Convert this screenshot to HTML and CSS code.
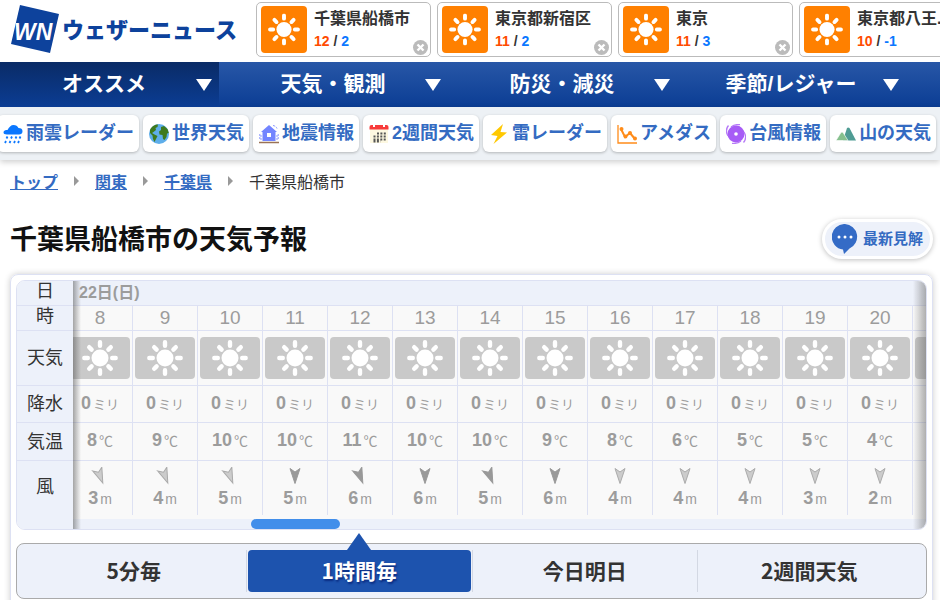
FILE: index.html
```html
<!DOCTYPE html>
<html lang="ja">
<head>
    <meta charset="UTF-8">
    <title>千葉県船橋市の天気予報 - ウェザーニュース</title>
    <link rel="stylesheet" href="styles.css">
</head>
<body>

<svg class="symbols" aria-hidden="true">
    <symbol id="sun" viewBox="0 0 36 36">
        <circle cx="18" cy="18" r="8.5" fill="#fff"/>
        <path d="M18 2.3v3.500M18 30.200v3.500M2.3 18h3.500M30.200 18h3.500M7.200 7.200l2.4 2.4M26.400 26.400l2.4 2.4M28.800 7.200l-2.4 2.4M9.600 26.400l-2.4 2.4" stroke="#fff" stroke-width="4.4" stroke-linecap="round"/>
    </symbol>
    <symbol id="close" viewBox="0 0 15 15">
        <circle cx="7.5" cy="7.5" r="7.5" fill="#bbb"/>
        <path d="M4.5 4.5l6 6M10.5 4.5l-6 6" stroke="#fff" stroke-width="2.4"/>
    </symbol>
</svg>

<header class="header">
    <a class="logo" href="#">
        <svg width="50" height="50" viewBox="0 0 50 50" aria-hidden="true">
            <path d="M10 0L49 9L40 48L1 39Z" fill="#0d429c"/>
            <text class="logo-mark" x="4" y="35">WN</text>
        </svg>
        <span class="logo-text">ウェザーニュース</span>
    </a>
    <div class="places" id="places"></div>
</header>

<nav class="menu">
    <a class="menu-item active" href="#"><span>オススメ</span><i class="caret"></i></a>
    <a class="menu-item" href="#"><span>天気・観測</span><i class="caret"></i></a>
    <a class="menu-item" href="#"><span>防災・減災</span><i class="caret"></i></a>
    <a class="menu-item" href="#"><span>季節/レジャー</span><i class="caret"></i></a>
</nav>

<nav class="shortcuts">
    <a class="pill" href="#">
        <svg width="20" height="20" viewBox="0 0 20 20"><path d="M4 10.5C1.5 10.5 .5 9.5 .5 8.2C.5 6.5 2.5 6 4.5 6C6 3 8 1 10.5 1C13 1 14.5 2 15.5 4C18 4 19.5 5 19.5 7.2C19.5 9.5 18 10.5 16 10.5Z" fill="#0b77ff"/><path d="M4.5 12.5l-1 2M9 12.5l-1 2M13.500 12.5l-1 2M17.5 12.5l-1 2M3 17l-1 2M7.5 17l-1 2M12 17l-1 2M16 17l-1 2" stroke="#0b77ff" stroke-width="1.8"/></svg>
        <span>雨雲レーダー</span>
    </a>
    <a class="pill" href="#">
        <svg width="20" height="20" viewBox="0 0 20 20"><circle cx="10" cy="10" r="10" fill="#5eaeea"/><path d="M1 6C3 2 6 .5 9 .5L8.500 3L6.5 4L7 6L4.5 8L3 9L5.5 10.5L8.5 12L7 15L5.5 18L4 15L3.5 11.5L1 9Z" fill="#3f7a1d"/><path d="M12 3L15 2L18.5 5L19.8 9L18 9.5L17.5 13L15.5 16L14 15L13.5 11L10.5 10.5L10 7.5L12 6Z" fill="#3f7a1d"/></svg>
        <span>世界天気</span>
    </a>
    <a class="pill" href="#">
        <svg width="20" height="20" viewBox="0 0 20 20"><path d="M10 1L18 8H16.5V17H3.500V8H2Z" fill="#7385ff"/><path d="M8 9h4v4H8z" fill="#fff"/><path d="M14 1.5q3 .5 4 3M.8 10v6M19.2 10v6M2 11v5M18 11v5" stroke="#8b99ff" stroke-dasharray="2 1" fill="none"/><path d="M0 18.5h20" stroke="#9a7356" stroke-width="1.5"/></svg>
        <span>地震情報</span>
    </a>
    <a class="pill" href="#">
        <svg width="20" height="20" viewBox="0 0 20 20"><path d="M1 5h18v14H1z" fill="#fdf8e1"/><path d="M.5 5.5V3q0-2 2-2h15q2 0 2 2v2.5z" fill="#f83b3b"/><path d="M4 2h2M14 2h2" stroke="#fff" stroke-width="2"/><path d="M8 9.500h9M4.5 12.5h12.5M4.5 15.5h12.5M4.5 17.5h7" stroke="#555" stroke-width="2" stroke-dasharray="2 1.4"/></svg>
        <span>2週間天気</span>
    </a>
    <a class="pill" href="#">
        <svg width="20" height="20" viewBox="0 0 20 20"><path d="M14 0L2 11L8.5 12L4.5 20L18 8.500L11.5 8Z" fill="#ffc800"/></svg>
        <span>雷レーダー</span>
    </a>
    <a class="pill" href="#">
        <svg width="20" height="20" viewBox="0 0 20 20"><path d="M1 1v18h19" stroke="#ff8c1a" stroke-width="1.3" fill="none"/><path d="M4 5l4 8 5-4 5 6" stroke="#ff8c1a" stroke-width="2" fill="none"/><g fill="#ff8c1a"><circle cx="4.5" cy="5" r="2"/><circle cx="8.5" cy="12.5" r="2"/><circle cx="13" cy="9" r="2"/><circle cx="18" cy="14.5" r="2"/></g></svg>
        <span>アメダス</span>
    </a>
    <a class="pill" href="#">
        <svg width="20" height="20" viewBox="0 0 20 20"><circle cx="10" cy="10" r="8.5" fill="#a75cf6"/><path d="M2 12C-.5 8 .5 4 2.5 1.5M18 8C20.5 12 19.5 16 17.5 18.5M5 3Q9 0 14 .7M15 17Q11 20 6 19.3" stroke="#b67af8" stroke-width="1.3" fill="none"/><circle cx="10" cy="10" r="1.8" fill="#fff"/></svg>
        <span>台風情報</span>
    </a>
    <a class="pill" href="#">
        <svg width="20" height="20" viewBox="0 0 20 20"><path d="M7 16.5L11 4Q12 3 13.5 4L20 16.5Z" fill="#4f9c94"/><path d="M0 16.5L5 8.5Q6 7.5 7 8.5L12 16.5Z" fill="#86c08e" stroke="#fff" stroke-width=".6"/></svg>
        <span>山の天気</span>
    </a>
</nav>

<main class="main">
    <nav class="breadcrumbs">
        <a href="#">トップ</a><i></i>
        <a href="#">関東</a><i></i>
        <a href="#">千葉県</a><i></i>
        <span>千葉県船橋市</span>
    </nav>

    <div class="title-row">
        <h1>千葉県船橋市の天気予報</h1>
        <button type="button" class="comment-button">
            <svg width="26" height="30" viewBox="0 0 26 30" aria-hidden="true"><path d="M13 0A12.8 12.8 0 0 1 17.5 24.5L12 30L11 25.5A12.8 12.8 0 0 1 13 0Z" fill="#346bc6"/><g fill="#fff"><circle cx="7" cy="13" r="1.5"/><circle cx="13" cy="13" r="1.5"/><circle cx="19" cy="13" r="1.5"/></g></svg>
            <span>最新見解</span>
        </button>
    </div>

    <section class="panel">
        <div class="forecast">
            <div class="forecast-scroll">
                <table id="forecastTable">
                    <tbody>
                        <tr class="day"><th scope="row">日</th><td colspan="14">22日(日)</td></tr>
                        <tr class="hour"><th scope="row">時</th></tr>
                        <tr class="weather"><th scope="row">天気</th></tr>
                        <tr class="rain"><th scope="row">降水</th></tr>
                        <tr class="temp"><th scope="row">気温</th></tr>
                        <tr class="wind"><th scope="row" rowspan="2">風</th></tr>
                        <tr class="track"><td colspan="14"><div class="thumb"></div></td></tr>
                    </tbody>
                </table>
            </div>
        </div>

        <div class="tabs">
            <button type="button">5分毎</button>
            <button type="button" class="active">1時間毎</button>
            <button type="button">今日明日</button>
            <button type="button">2週間天気</button>
        </div>
    </section>
</main>

<script>
    const places = [
        { name: '千葉県船橋市', high: 12, low: 2 },
        { name: '東京都新宿区', high: 11, low: 2 },
        { name: '東京', high: 11, low: 3 },
        { name: '東京都八王...', high: 10, low: -1 },
    ];

    // angle: arrow rotation in degrees, strong: solid arrow
    const hours = [
        { hour: 8, temp: 8, wind: 3, angle: -22, strong: false },
        { hour: 9, temp: 9, wind: 4, angle: -22, strong: false },
        { hour: 10, temp: 10, wind: 5, angle: -22, strong: false },
        { hour: 11, temp: 10, wind: 5, angle: 0, strong: true },
        { hour: 12, temp: 11, wind: 6, angle: -22, strong: true },
        { hour: 13, temp: 10, wind: 6, angle: 0, strong: true },
        { hour: 14, temp: 10, wind: 5, angle: -22, strong: true },
        { hour: 15, temp: 9, wind: 6, angle: 0, strong: true },
        { hour: 16, temp: 8, wind: 4, angle: 0, strong: false },
        { hour: 17, temp: 6, wind: 4, angle: 0, strong: false },
        { hour: 18, temp: 5, wind: 4, angle: 0, strong: false },
        { hour: 19, temp: 5, wind: 3, angle: 0, strong: false },
        { hour: 20, temp: 4, wind: 2, angle: 0, strong: false },
        { hour: 21, temp: 4, wind: 2, angle: 0, strong: false },
    ];

    document.getElementById('places').innerHTML = places.map(p => `
        <div class="place">
            <svg class="place-icon" viewBox="0 0 46 46" aria-hidden="true"><use href="#sun" x="7" y="7" width="32" height="32"/></svg>
            <div class="place-text">
                <a href="#">${p.name}</a>
                <p><b class="high">${p.high}</b> / <b class="low">${p.low}</b></p>
            </div>
            <button type="button" class="place-close" aria-label="削除"><svg width="15" height="15"><use href="#close"/></svg></button>
        </div>`).join('');

    function fillRow(name, cell) {
        const row = document.querySelector('#forecastTable .' + name);
        row.insertAdjacentHTML('beforeend', hours.map(h => `<td>${cell(h)}</td>`).join(''));
    }

    fillRow('hour', h => h.hour);
    fillRow('weather', () => '<svg class="weather-icon" viewBox="0 0 60 42"><use href="#sun" x="12" y="3" width="36" height="36"/></svg>');
    fillRow('rain', () => '<b>0</b><small>ミリ</small>');
    fillRow('temp', h => `<b>${h.temp}</b><small>℃</small>`);
    fillRow('wind', h => `
        <svg class="arrow" width="18" height="18" viewBox="-9 -9 18 18">
            <path class="${h.strong ? 'strong' : 'weak'}" transform="rotate(${h.angle})" d="M-5 -7.5L0 -4L5 -7.5L0 7.5Z"/>
        </svg>
        <div><b>${h.wind}</b><small>m</small></div>`);
</script>

</body>
</html>
```
FILE: styles.css
```css
* {
    box-sizing: border-box;
}
body {
    margin: 0;
    font-family: "Liberation Sans", Arial, "Noto Sans CJK JP", sans-serif;
    font-size: 16px;
    color: #333;
    background: #fff;
    overflow: hidden;
}
a {
    text-decoration: none;
}
button {
    font-family: inherit;
    border: none;
    cursor: pointer;
}
.symbols {
    display: none;
}

/* header */
.header {
    display: flex;
    align-items: center;
    height: 62px;
    padding: 0 0 3px 10px;
    overflow: hidden;
}
.logo {
    display: flex;
    align-items: center;
    flex: none;
    gap: 2px;
    width: 246px;
    color: #0d429c;
}
.logo-mark {
    font-size: 23px;
    font-weight: bold;
    font-style: italic;
    fill: #fff;
}
.logo-text {
    padding-bottom: 4px;
    font-family: "Noto Sans CJK JP", sans-serif;
    font-size: 22px;
    font-weight: 900;
    white-space: nowrap;
}
.places {
    display: flex;
    gap: 6px;
}
.place {
    display: flex;
    flex: none;
    width: 175px;
    height: 55px;
    padding: 3px 2px 1px 4px;
    border: 1px solid #bbb;
    border-radius: 5px;
}
.place-icon {
    flex: none;
    width: 46px;
    height: 47px;
    background: #ff8000;
    border-radius: 4px;
}
.place-text {
    flex: 1;
    padding: 3px 0 0 7px;
    white-space: nowrap;
    line-height: 20px;
}
.place-text a {
    color: #333;
    font-weight: bold;
    line-height: 18px;
}
.place-text p {
    margin: 2px 0 0;
    font-size: 14px;
    font-weight: bold;
}
.high {
    color: #ff4b00;
}
.low {
    color: #0b77ff;
}
.place-close {
    display: flex;
    align-self: flex-end;
    margin-left: -15px;
    padding: 0;
    background: none;
}

/* main menu */
.menu {
    display: flex;
    height: 45px;
    background: linear-gradient(#2857a7, #0b3d94);
}
.menu-item {
    display: flex;
    align-items: center;
    justify-content: flex-end;
    gap: 7px;
    width: 229px;
    padding: 0 7px 2px 0;
    color: #fff;
    font-size: 21px;
    font-weight: bold;
}
.menu-item.active {
    width: 219px;
    background: linear-gradient(#0a2b66, #0b3d94);
}
.menu-item span {
    width: 170px;
    padding-bottom: 4px;
    text-align: center;
}
.caret {
    margin-top: 3px;
    border: 8px solid transparent;
    border-top: 12px solid #fff;
    border-bottom: none;
}

/* shortcuts */
.shortcuts {
    display: flex;
    gap: 4px;
    padding: 8px 0;
    background: #edf1f5;
    box-shadow: 0 2px 6px rgba(0, 0, 0, 0.2);
}
.pill {
    display: flex;
    align-items: center;
    flex: none;
    gap: 3px;
    height: 37px;
    padding: 0 5px 0 6px;
    background: #fff;
    border-radius: 6px;
    box-shadow: 0 1px 3px rgba(0, 0, 0, 0.25);
    color: #346bc2;
    font-size: 18px;
    font-weight: bold;
    white-space: nowrap;
}
.pill:first-child {
    margin-left: -3px;
}
.pill span {
    padding-bottom: 5px;
}

.main {
    padding: 0 7px 0 10px;
}
.breadcrumbs {
    display: flex;
    align-items: center;
    gap: 16px;
    height: 44px;
    padding-bottom: 2px;
}
.breadcrumbs a {
    color: #346bc2;
    font-weight: bold;
    text-decoration: underline;
}
.breadcrumbs i {
    border: 5px solid transparent;
    border-left-color: #999;
    border-right: none;
}
.title-row {
    display: flex;
    align-items: center;
    justify-content: space-between;
    height: 70px;
}
h1 {
    margin: 0;
    padding-bottom: 4px;
    color: #111;
    font-size: 27px;
}
.comment-button {
    display: flex;
    align-items: center;
    gap: 5px;
    height: 40px;
    padding: 0 7px;
    background: #edf1fa;
    border: 3px solid #fff;
    border-radius: 20px;
    box-shadow: 0 1px 5px rgba(0, 0, 0, 0.25);
    color: #346bc2;
    font-size: 15px;
    font-weight: bold;
}
.comment-button span {
    padding-bottom: 3px;
}

/* forecast */
.panel {
    padding: 5px 5px 20px;
    border: 1px solid #dde1f3;
    border-radius: 8px;
    box-shadow: 0 0 6px rgba(0, 0, 0, 0.2);
}
.forecast {
    position: relative;
    border: 1px solid #dde1f3;
    border-radius: 9px;
    overflow: hidden;
}
.forecast::after {
    content: "";
    position: absolute;
    top: 0;
    right: 0;
    bottom: 0;
    z-index: 2;
    width: 13px;
    background: linear-gradient(to right, rgba(100, 100, 100, 0), rgba(100, 100, 100, 0.5));
}
.forecast-scroll {
    overflow: hidden;
}
table {
    margin-left: -5px;
    border-collapse: separate;
    border-spacing: 0;
}
th {
    position: sticky;
    left: 0;
    z-index: 1;
    min-width: 56px;
    padding: 0 0 4px;
    background: #edf1fa;
    border-bottom: 1px solid #dde1f3;
    font-size: 18px;
    font-weight: 400;
}
th::after {
    content: "";
    position: absolute;
    top: 0;
    bottom: -1px;
    left: 100%;
    width: 8px;
    background: linear-gradient(to right, rgba(80, 80, 80, 0.5), rgba(80, 80, 80, 0));
}
td {
    min-width: 65px;
    padding: 0;
    background: #f9f9f9;
    border-right: 1px solid #dde1f3;
    border-bottom: 1px solid #dde1f3;
    color: #9c9c9c;
    text-align: center;
    line-height: 20px;
}
td b {
    font-size: 18px;
}
td small {
    margin-left: 2px;
    font-size: 14px;
}
.day, .hour {
    height: 25px;
}
.day th, .hour th {
    line-height: 20px;
}
.day td {
    padding-left: 11px;
    background: #edf1fa;
    font-weight: bold;
    text-align: left;
}
.hour td {
    font-size: 19px;
}
.weather {
    height: 55px;
}
.weather-icon {
    display: block;
    width: 60px;
    height: 42px;
    margin: 0 auto;
    background: #c9c9c9;
    border-radius: 4px;
}
.rain {
    height: 37px;
}
.rain small {
    font-size: 13px;
}
.temp {
    height: 38px;
}
.temp td {
    padding-bottom: 2px;
}
.wind {
    height: 54px;
}
.wind th {
    padding-bottom: 20px;
    border-bottom: none;
}
.wind td {
    padding-bottom: 1px;
    border-bottom: none;
}
.arrow {
    display: block;
    margin: 0 auto 3px;
}
.strong {
    fill: #999;
    stroke: #999;
}
.weak {
    fill: #ccc;
    stroke: #aaa;
}
.track td {
    height: 14px;
    background: #edf1fa;
    border: none;
    border-top: 4px solid #f9f9f9;
}
.thumb {
    width: 89px;
    height: 10px;
    margin-left: 183px;
    background: #428eea;
    border-radius: 5px;
}

/* tabs */
.tabs {
    display: flex;
    margin-top: 13px;
    padding: 6px 5px;
    background: #edf1fa;
    border: 1px solid #aaa;
    border-radius: 8px;
}
.tabs button {
    position: relative;
    flex: 1;
    height: 42px;
    padding: 0 0 2px;
    background: none;
    border-right: 1px solid #d3d8e3;
    color: #333;
    font-family: "Noto Sans CJK JP", sans-serif;
    font-size: 21px;
    font-weight: bold;
}
.tabs button:last-child {
    border-right: none;
}
.tabs button.active {
    margin: 0 1px;
    background: #1d53ae;
    border-right: none;
    border-radius: 4px;
    color: #fff;
    text-shadow: 1px 2px 2px #0a2b80;
}
.tabs button.active + button {
    border-left: 1px solid #d3d8e3;
}
.tabs button.active::before {
    content: "";
    position: absolute;
    bottom: 100%;
    left: 50%;
    transform: translateX(-50%);
    border: 12px solid transparent;
    border-top: none;
    border-bottom: 17px solid #1d53ae;
}
```
